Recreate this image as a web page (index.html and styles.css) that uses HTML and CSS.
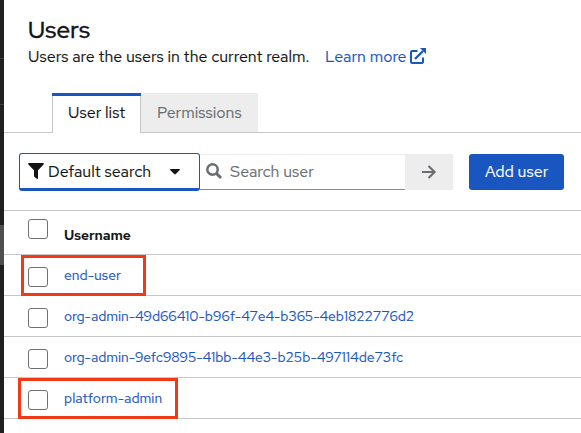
FILE: index.html
```
<!DOCTYPE html>
<html lang="en">
<head>
<meta charset="utf-8">
<title>Users</title>
<link rel="stylesheet" href="styles.css">
</head>
<body>
<div class="app">
  <aside class="sidebar"><i class="rule first"></i><i class="rule second"></i><i class="current"></i></aside>
  <main class="content">
    <header class="heading">
      <h1>Users</h1>
      <p><span class="intro">Users are the users in the current realm.</span><a class="learn" href="#"><span>Learn more</span><svg width="16" height="16" viewBox="0 0 16 16"><path d="M7.5 3H2.2Q1 3 1 4.2V13.8Q1 15 2.2 15H11.8Q13 15 13 13.8V9.5" fill="none" stroke="currentColor" stroke-width="2"/><path d="M5 11 13 3" stroke="currentColor" stroke-width="2.3"/><path d="M10 0H16V6Z" fill="currentColor"/></svg></a></p>
    </header>
    <nav class="tabs">
      <a class="tab active" href="#"><span>User list</span></a>
      <a class="tab" href="#"><span>Permissions</span></a>
    </nav>
    <section class="toolbar">
      <button class="select"><svg class="funnel" width="16" height="16" viewBox="0 0 16 16"><path d="M.7 0H15.3Q16.4 .5 15.6 1.5L10 7.3V15.2Q9.8 16.3 8.8 15.8L6.5 14Q6 13.6 6 13V7.3L.4 1.5Q-.4 .5 .7 0Z" fill="currentColor"/></svg><span class="t-default">Default search</span><svg class="caret" width="10" height="6" viewBox="0 0 10 6"><path d="M.7 0H9.3Q10.4 .3 9.6 1.2L5.8 5Q5 5.8 4.2 5L.4 1.2Q-.4 .3 .7 0Z" fill="currentColor"/></svg></button>
      <div class="search"><svg width="16" height="16" viewBox="0 0 16 16" fill="none" stroke="currentColor"><circle cx="6.5" cy="6.5" r="5.2" stroke-width="2.5"/><path d="M10.4 10.4 15 15" stroke-width="3"/></svg><span class="t-search">Search user</span></div>
      <button class="go"><svg width="14" height="14" viewBox="0 0 14 14" fill="none" stroke="currentColor" stroke-width="2.1"><path d="M0 7H12.4M6.5 .9 12.6 7 6.5 13.1"/></svg></button>
      <button class="add"><span>Add user</span></button>
    </section>
    <section class="table">
      <div class="row head"><i class="check"></i><b>Username</b></div>
      <div class="row"><i class="check"></i><a href="#">end-user</a><i class="mark mark-end"></i></div>
      <div class="row"><i class="check"></i><a class="uuid" href="#">org-admin-49d66410-b96f-47e4-b365-4eb1822776d2</a></div>
      <div class="row"><i class="check"></i><a class="uuid" href="#">org-admin-9efc9895-41bb-44e3-b25b-497114de73fc</a></div>
      <div class="row"><i class="check"></i><a href="#">platform-admin</a><i class="mark mark-platform"></i></div>
    </section>
  </main>
</div>
</body>
</html>
```
FILE: styles.css
```
* { box-sizing: border-box; }
body { margin: 0; background: #fff; color: #151515; font: 16px/24px "Red Hat Text", Lato, "Open Sans", sans-serif; overflow: hidden; }
a { color: #1a56c0; text-decoration: none; }
button { font: inherit; border: 0; padding: 0; color: inherit; }
svg { display: block; flex: none; overflow: visible; }
span, b, .row a { white-space: nowrap; }
span { -webkit-text-stroke: .15px; }
.app { display: flex; height: 433px; }
.sidebar { width: 4px; flex: none; background: #212021; display: flex; flex-direction: column; }
.rule { height: 1px; background: #3c3f42; }
.first { margin-top: 58px; }
.second { margin-top: 45px; }
.current { height: 40px; margin-top: 120px; background: #4f4f4f; }
.content { flex: 1; min-width: 0; }
.heading { height: 93px; padding: 14px 0 0 24px; }
h1 { margin: 0; font-family: "Red Hat Display", "Red Hat Text", Lato, sans-serif; font-size: 24px; line-height: 31px; font-weight: 500; letter-spacing: .15px; -webkit-text-stroke: .3px; }
.heading p { margin: 0; display: flex; }
.intro { width: 297px; }
.learn { display: flex; }
.learn span { width: 85px; }
.learn svg { margin-top: 3px; }
.tabs { display: flex; height: 40px; padding-left: 48px; border-bottom: 1px solid #c7c7c7; }
.tab { height: 39px; width: 117px; padding: 8px 0 0 16px; background: #ededed; color: #6a6e73; }
.tab.active { height: 40px; width: 89px; padding: 5px 0 0 16px; background: #fff; color: #151515; border-top: 3px solid #1a56c0; box-shadow: inset 1px 0 #c7c7c7, inset -1px 0 #c7c7c7; }
.toolbar { height: 77px; padding: 20px 17px 0 15px; display: flex; }
.select { display: flex; align-items: center; width: 181px; height: 38px; padding: 2px 0 0 8px; background: #fff; border: 1px solid #1a56c0; border-bottom-width: 3px; border-radius: 3px; text-align: left; }
.funnel { margin-top: -2px; }
.t-default { margin-left: 4px; width: 103px; }
.caret { margin-left: 19px; }
.search { display: flex; width: 205px; height: 36px; margin-top: 1px; padding: 5px 0 0 6px; color: #6a6e73; border-top: 1px solid #ededed; border-bottom: 1px solid #8a8d90; }
.search svg { margin-top: 3px; }
.t-search { margin-left: 8px; }
.go { width: 48px; height: 36px; margin-top: 1px; display: grid; place-items: center; background: #ededed; color: #6a6e73; }
.add { width: 95px; height: 36px; margin: 1px 0 0 16px; padding-left: 16px; text-align: left; background: #1a56c0; color: #fff; border-radius: 3px; }
.table { border-top: 1px solid #c7c7c7; font-size: 14px; line-height: 20px; }
.row { position: relative; height: 41px; display: flex; padding: 10px 0 0 24px; border-bottom: 1px solid #c7c7c7; }
.row a { -webkit-text-stroke: .15px; }
.row .uuid { letter-spacing: -.065px; }
.row.head { height: 44px; padding-top: 8px; }
.check { width: 20px; height: 20px; flex: none; margin: 2px 16px 0 0; border: 1px solid #707070; border-radius: 3px; background: #fff; }
.head .check { margin-top: 0; }
.head b { margin-top: 6px; font-weight: 600; letter-spacing: -.1px; -webkit-text-stroke: .15px; }
.mark { position: absolute; border: 3px solid #f03a17; height: 41px; top: 0; }
.mark-end { left: 17px; width: 125px; }
.mark-platform { left: 14px; width: 160px; }
```
